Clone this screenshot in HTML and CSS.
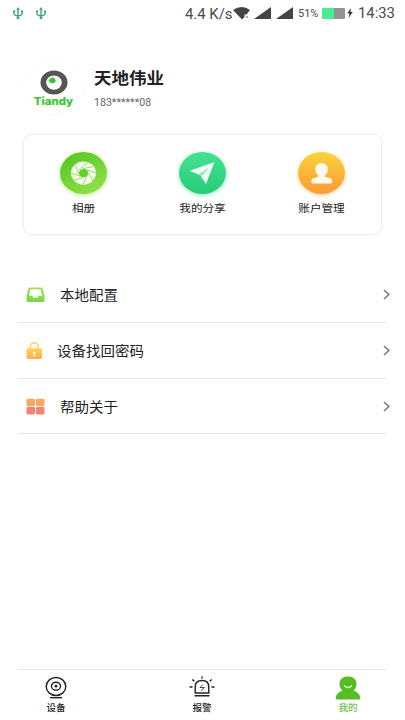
FILE: index.html
```
<!DOCTYPE html>
<html lang="zh-CN">
<head>
<meta charset="utf-8">
<title>我的</title>
<link rel="stylesheet" href="styles.css">
</head>
<body>
<div class="screen">
  <header class="status">
    <svg class="usb" viewBox="0 0 12 14"><path d="M6 1.500V12M1.500 4V6.500Q1.800 9.500 6 9.500T10.500 6.500V4M.5 4.500H3M9 4.500h2.500"/><path class="solid" d="M6 0L8 3H4ZM4.600 10.500h2.800v2.500H4.600Z"/></svg>
    <svg class="usb" viewBox="0 0 12 14"><path d="M6 1.500V12M1.500 4V6.500Q1.800 9.500 6 9.500T10.500 6.500V4M.5 4.500H3M9 4.500h2.500"/><path class="solid" d="M6 0L8 3H4ZM4.600 10.500h2.800v2.500H4.600Z"/></svg>
    <span class="speed">4.4 K/s</span>
    <svg class="wifi" viewBox="0 0 18 13"><path d="M0 3Q9-3 17 3L13.500 7.500H11.500V10L9 12.500Z"/><path class="faint" d="M13 9h2v2h-2z"/></svg>
    <svg class="signal" viewBox="0 0 17 12"><path d="M17 0V12H0Z"/></svg>
    <svg class="signal second" viewBox="0 0 17 12"><path d="M17 0V12H0Z"/></svg>
    <span class="percent">51%</span>
    <span class="battery"></span>
    <svg class="bolt" viewBox="0 0 6 11"><path d="M4 0L0 6h2.500L1.500 11L6 4.500H3.500Z"/></svg>
    <time class="clock">14:33</time>
  </header>

  <section class="profile">
    <div class="avatar">
      <svg class="eye" viewBox="0 0 28 25"><ellipse cx="14" cy="12.500" rx="13.500" ry="12" fill="#555"/><ellipse cx="14" cy="12.600" rx="7.800" ry="7.200" fill="#fff"/><path d="M8.500 10.500Q9.500 8 12.500 7.300Q15.500 8 15.800 10.500Q15 13.500 12 13.300Q9.500 13 8.500 10.500Z" fill="#36c82d"/></svg>
      <span class="brand">Tiandy</span>
    </div>
    <div class="identity">
      <h1>天地伟业</h1>
      <p>183******08</p>
    </div>
  </section>

  <section class="card">
    <a class="action">
      <span class="disc album"><svg viewBox="0 0 47 42"><ellipse cx="23.500" cy="21" rx="12.500" ry="11.500" fill="#f5ffe9"/><path d="M23.500 16.500l3.500 1.400 1.500 3.100-1.500 3.200-3.500 1.400-3.500-1.400-1.500-3.200 1.500-3.100Z" fill="#65cf2b"/><path d="M19 17.500L28 10.500M23.500 16.500L33 14.500M27 18L36 21M28.500 21L33 29M27 24.200L23 32M23.500 25.600L14 28M20 24.200L11 21M18.500 21L15 13" fill="none" stroke="#6dcc38" stroke-width=".7"/></svg></span>
      <span class="label">相册</span>
    </a>
    <a class="action">
      <span class="disc share"><svg viewBox="0 0 47 42"><path d="M35.500 10L10.800 18.700L19.500 22.500L29.500 16L22 24.500L27 32Z" fill="#f2fff7"/><path d="M19.500 22.500L29.500 16L22 24.500Z" fill="#9beebb"/></svg></span>
      <span class="label">我的分享</span>
    </a>
    <a class="action">
      <span class="disc account"><svg viewBox="0 0 47 42"><path d="M23.500 11.300c4 0 6.300 2.500 6.300 6 0 2.500-1 4.500-2.700 6v1.500l5 1.500c1.600.6 2 1.500 2 3.500 0 1.300-.4 1.700-1.600 1.700H15c-1.200 0-1.600-.4-1.600-1.700 0-2 .4-2.900 2-3.500l4.800-1.500v-1.500c-1.900-1.500-3-3.500-3-6 0-3.500 2.300-6 6.300-6Z" fill="#fffaf0"/></svg></span>
      <span class="label">账户管理</span>
    </a>
  </section>

  <main class="menu">
    <a class="row">
      <svg class="icon" viewBox="0 0 20 18"><defs><linearGradient id="tray" x2="0" y2="1"><stop stop-color="#a5df50"/><stop offset="1" stop-color="#70dd45"/></linearGradient></defs><path fill="url(#tray)" fill-rule="evenodd" d="M4 1.500h12q1.200 0 1.500 1.200L19.500 10v5.500q0 1.500-1.500 1.500H2Q.5 17 .5 15.500V10L2.500 2.700Q2.800 1.500 4 1.500ZM4.700 3.500L3 10.300h3.500l1.300 2.200h4.400l1.300-2.200H17L15.300 3.500Z"/></svg>
      <span class="label">本地配置</span>
      <svg class="chevron" viewBox="0 0 7 11"><path d="M1 1L5.800 5.500L1 10"/></svg>
    </a>
    <a class="row tight">
      <svg class="icon" viewBox="0 0 20 18"><defs><linearGradient id="lock" x2="0" y2="1"><stop stop-color="#ffd45c"/><stop offset="1" stop-color="#f8b052"/></linearGradient></defs><path d="M5.500 8V5Q5.500 1 9.700 1T14 5V8" fill="none" stroke="#ffd66c" stroke-width="1.800"/><rect x="1.500" y="6.500" width="16.500" height="11.500" rx="1.800" fill="url(#lock)"/><path d="M8 10.500h3.500v1.800h-1v3H9v-3H8Z" fill="#fff2cf"/></svg>
      <span class="label">设备找回密码</span>
      <svg class="chevron" viewBox="0 0 7 11"><path d="M1 1L5.800 5.500L1 10"/></svg>
    </a>
    <a class="row">
      <svg class="icon" viewBox="0 0 20 18"><g fill="#f9a663"><rect x=".5" y=".8" width="9" height="7.900" rx="1.500"/><rect x="10.500" y=".8" width="9" height="7.900" rx="1.500"/></g><g fill="#f58074"><rect x=".5" y="9.600" width="9" height="7.900" rx="1.500"/><rect x="10.500" y="9.600" width="9" height="7.900" rx="1.500"/></g></svg>
      <span class="label">帮助关于</span>
      <svg class="chevron" viewBox="0 0 7 11"><path d="M1 1L5.800 5.500L1 10"/></svg>
    </a>
  </main>

  <nav class="tabs">
    <a class="tab">
      <svg viewBox="0 0 28 24" class="line"><ellipse cx="14" cy="10.500" rx="9.800" ry="9"/><ellipse cx="14" cy="10.200" rx="4.500" ry="4"/><circle cx="14" cy="10.200" r=".7"/><path d="M8 21.700h12"/></svg>
      <span>设备</span>
    </a>
    <a class="tab">
      <svg viewBox="0 0 28 24" class="line"><path d="M7.200 17V11Q7.200 4.500 14 4.500T20.800 11V17ZM6.500 19.800h15M14 .5v2M4.300 3.500l2 1.800M23.700 3.500l-2 1.800M1.500 11h3M23.500 11h3"/><path class="thin" d="M15 8.500L12 11.500h4.500L13 14.500"/></svg>
      <span>报警</span>
    </a>
    <a class="tab active">
      <svg viewBox="0 0 28 24"><path d="M14 .5c5.500 0 8.500 3 8.500 7.500 0 3-1.200 5-3 6.500 4 1.300 6.500 4 6.900 7.500q.1 1.500-1.400 1.500H3q-1.500 0-1.400-1.500C2 18.500 4.500 15.800 8.500 14.500c-1.800-1.500-3-3.500-3-6.500C5.500 3.500 8.500.5 14 .5Z" fill="#55bd25"/><path d="M10.500 10Q14 13 17.500 10" fill="none" stroke="#e9ffdc" stroke-width="1.300" stroke-linecap="round"/></svg>
      <span>我的</span>
    </a>
  </nav>
</div>
</body>
</html>
```
FILE: styles.css
```
* {
  box-sizing: border-box;
}

body {
  margin: 0;
  background: #fff;
  color: #222;
  font-family: Roboto, "Noto Sans CJK SC", sans-serif;
}

h1,
p {
  margin: 0;
}

svg {
  display: block;
  flex: none;
}

.screen {
  display: flex;
  flex-direction: column;
  width: 405px;
  height: 720px;
  overflow: hidden;
}

.status {
  display: flex;
  align-items: center;
  height: 26px;
  padding-left: 12px;
  color: #4a4a4a;
  white-space: nowrap;
}

.usb {
  width: 12px;
  height: 13px;
  margin-right: 11px;
  fill: none;
  stroke: #43a283;
  stroke-width: 1.5;
}

.usb .solid {
  fill: #43a283;
  stroke: none;
}

.speed {
  width: 49px;
  margin-left: 127px;
  padding-top: 1px;
  font-size: 14.9px;
  line-height: 26px;
}

.wifi {
  width: 18px;
  height: 13px;
  margin-left: -1px;
  fill: #444;
}

.wifi .faint {
  fill: #aaa;
}

.signal {
  width: 17px;
  height: 12px;
  margin-left: 3px;
  fill: #444;
}

.signal.second {
  margin-left: 5px;
}

.percent {
  width: 21px;
  margin-left: 5px;
  font-size: 11px;
}

.battery {
  width: 23px;
  height: 11px;
  margin-left: 3px;
  border-radius: 1px;
  background: linear-gradient(90deg, #48ed91 52%, #929292 52%);
}

.bolt {
  width: 6px;
  height: 10px;
  margin-left: 2px;
  fill: #333;
}

.clock {
  margin-left: 5px;
  font-size: 14.8px;
}

.profile {
  display: flex;
  height: 108px;
  padding: 33px 0 0 23px;
}

.avatar {
  display: flex;
  flex-direction: column;
  align-items: center;
  width: 61px;
  height: 56px;
  padding-top: 10px;
  border: 1px solid #fafafa;
  border-radius: 50%;
}

.eye {
  width: 28px;
  height: 25px;
}

.brand {
  color: #36c82d;
  font: 800 11.4px/13px Inter, sans-serif;
  transform: scaleY(.9);
}

.identity {
  margin-left: 10px;
  padding-top: 6px;
}

.identity h1 {
  font-size: 17.5px;
  font-weight: 700;
  line-height: 26px;
  transform: scaleY(.93);
}

.identity p {
  margin-top: 5px;
  color: #666;
  font-size: 10.6px;
  line-height: 14px;
}

.card {
  display: grid;
  grid-template-columns: repeat(3, 119px);
  width: 359px;
  height: 101px;
  margin-left: 23px;
  border: 1px solid #efefef;
  border-radius: 9px;
  box-shadow: 0 0 3px #eee;
}

.action {
  display: flex;
  flex-direction: column;
  align-items: center;
  padding-top: 17px;
  font-size: 11.6px;
  line-height: 18px;
}

.label {
  transform: scaleY(.93);
}

.disc {
  width: 47px;
  height: 42px;
  margin-bottom: 5px;
  border-radius: 50%;
}

.album {
  background: linear-gradient(150deg, #4fc51e, #9be34d);
  box-shadow: 0 1px 4px #b7f48b;
}

.share {
  background: linear-gradient(#43e292, #28cb76);
  box-shadow: 0 1px 4px #8cf5bb;
}

.account {
  background: linear-gradient(#fbd33c, #fc9a36);
  box-shadow: 0 1px 4px #ffd798;
}

.menu {
  margin: 32px 19px 0 18px;
}

.row {
  display: flex;
  align-items: center;
  height: 56px;
  padding-left: 8px;
  border-bottom: 1px solid #e5e5e5;
  font-size: 14.5px;
}

.row .label {
  padding-bottom: 2px;
}

.row:last-child {
  height: 55px;
}

.icon {
  width: 19px;
  height: 17px;
  margin-right: 15px;
}

.tight .icon {
  margin-left: -1px;
  margin-right: 13px;
}

.chevron {
  width: 7px;
  height: 11px;
  margin: 0 -4px 0 auto;
  fill: none;
  stroke: #777;
  stroke-width: 1.5;
}

.tabs {
  display: flex;
  justify-content: space-between;
  height: 51px;
  margin: auto 19px 0 18px;
  padding: 6px 18px 0;
  border-top: 1px solid #e5e5e5;
}

.tab {
  display: flex;
  flex-direction: column;
  align-items: center;
  width: 40px;
  font-size: 9.6px;
  font-weight: 500;
  line-height: 15px;
}

.tab svg {
  width: 28px;
  height: 24px;
}

.line {
  fill: none;
  stroke: #222;
  stroke-width: 1.4;
}

.line .thin {
  stroke-width: .8;
}

.active {
  color: #6cc144;
}
```
